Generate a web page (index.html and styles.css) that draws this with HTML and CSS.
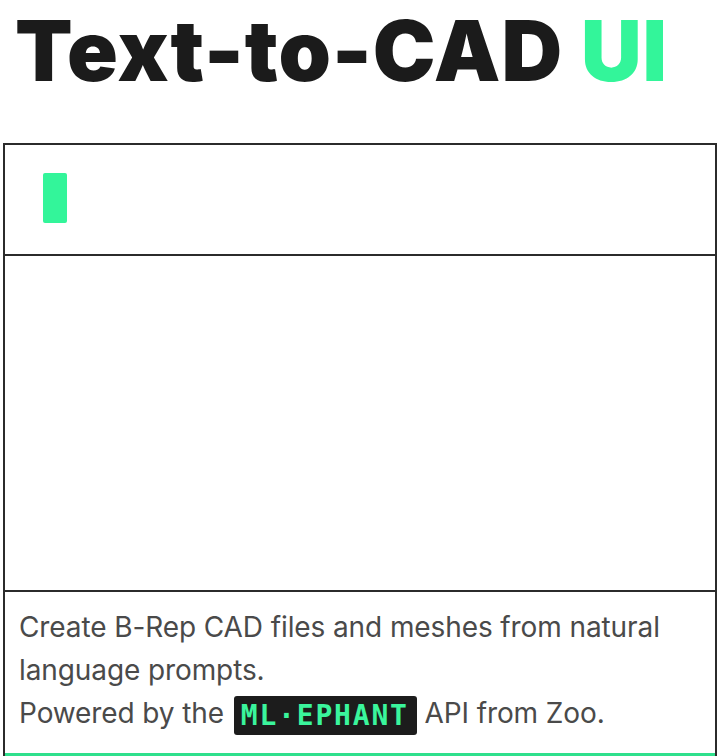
FILE: index.html
```html
<!DOCTYPE html>
<html>
<head>
<meta charset="utf-8">
<link rel="stylesheet" href="styles.css">
</head>
<body>
<h1 class="title">Text-to-CAD <span class="accent">UI</span></h1>
<div class="app">
  <div class="prompt"><span class="cursor"></span></div>
  <div class="viewer"></div>
  <div class="info">
    <p>Create B-Rep CAD files and meshes from natural language prompts.<br>Powered by the <span class="badge">ML·EPHANT</span> API from Zoo.</p>
  </div>
  <div class="bar"></div>
</div>
</body>
</html>
```
FILE: styles.css
```css
html, body { margin: 0; padding: 0; background: #fff; }
body { width: 720px; height: 756px; overflow: hidden; font-family: Inter, "Noto Sans", sans-serif; }
.title {
  margin: 0;
  padding: 9px 0 0 15px;
  height: 143px;
  box-sizing: border-box;
  font-size: 84px;
  font-weight: 900;
  letter-spacing: 1px;
  color: #1b1b1b;
  line-height: 1;
  white-space: nowrap;
}
.accent { color: #33f59a; }
.app {
  margin-left: 3px;
  width: 714px;
  border-left: 2px solid #2b2b2b;
  border-right: 2px solid #2b2b2b;
  border-top: 2px solid #2b2b2b;
  box-sizing: border-box;
}
.prompt {
  height: 111px;
  border-bottom: 2px solid #2b2b2b;
  box-sizing: border-box;
  padding: 28px 0 0 38px;
}
.cursor { display: block; width: 24px; height: 50px; background: #33f59a; border-radius: 2px; }
.viewer { height: 336px; border-bottom: 2px solid #2b2b2b; box-sizing: border-box; }
.info { height: 161px; box-sizing: border-box; padding: 14px 14px 0 14px; }
.info p {
  margin: 0;
  font-size: 28px;
  line-height: 43px;
  color: #4a4a4a;
  font-weight: 400;
  letter-spacing: -0.1px;
}
.badge {
  display: inline-block;
  background: #1c1c1c;
  color: #3af59c;
  font-family: "DejaVu Sans Mono", monospace;
  font-weight: 700;
  font-size: 28px;
  letter-spacing: 1.8px;
  line-height: 39px;
  height: 39px;
  padding: 0 8px 0 7px;
  margin-left: 2px;
  border-radius: 3px;
  vertical-align: -2px;
}
.bar { height: 4px; background: #2fe08c; }
```
